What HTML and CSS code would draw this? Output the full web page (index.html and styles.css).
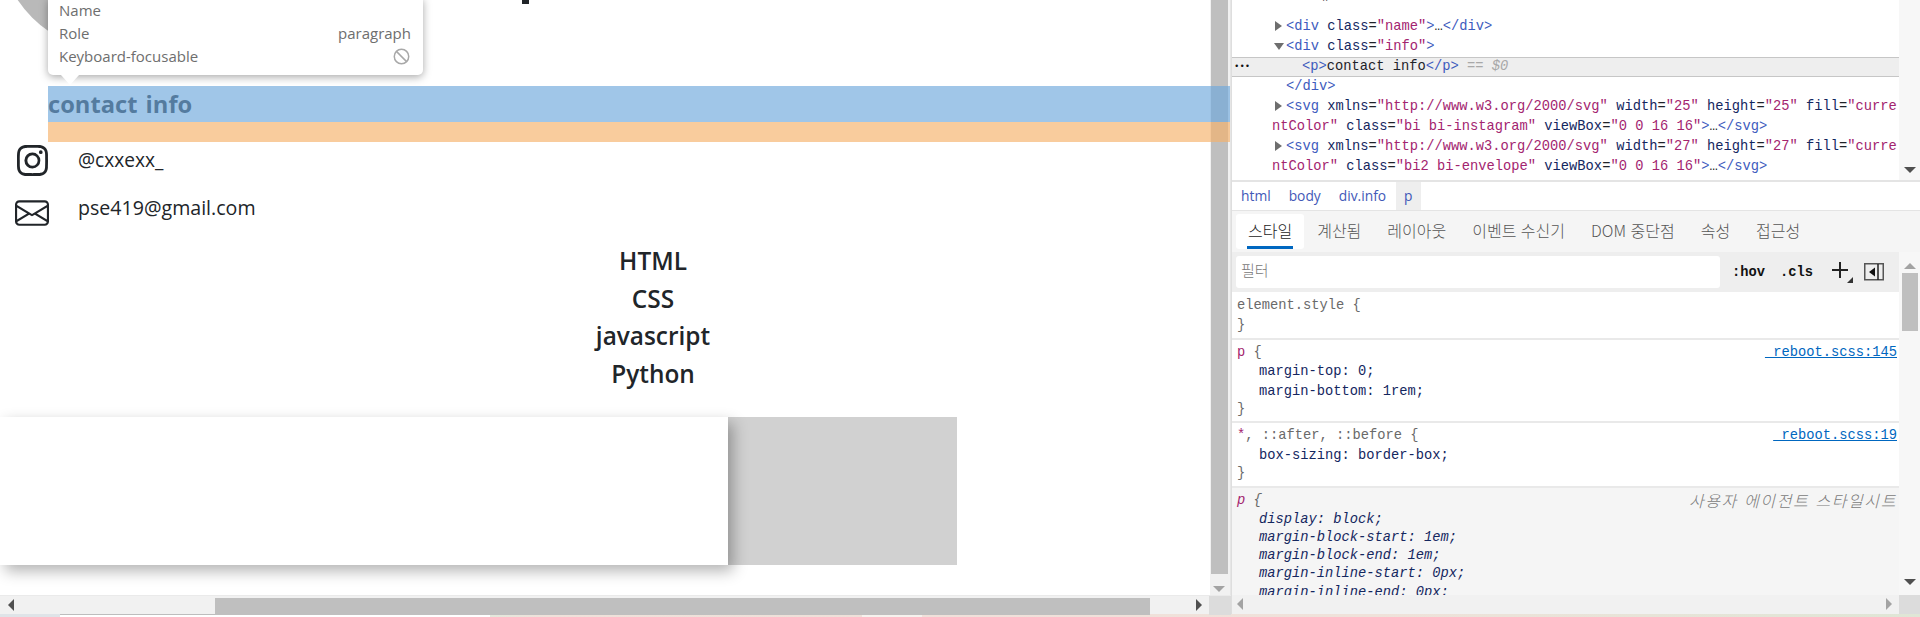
FILE: index.html
```html
<!DOCTYPE html>
<html lang="ko">
<head>
<meta charset="utf-8">
<title>contact info</title>
<link rel="stylesheet" href="styles.css">
</head>
<body>
<div class="app">
  <div class="main">
    <div class="left">
      <div class="upper">
        <div class="viewport">
          <div class="avatar"></div>
          <div class="stem"></div>
          <div class="info"><p class="info-title">contact info</p></div>
          <div class="contact-row row-insta">
            <svg class="icon-insta" viewBox="0 0 16 16" fill="currentColor"><path d="M8 0C5.829 0 5.556.01 4.703.048 3.85.088 3.269.222 2.76.42a3.917 3.917 0 0 0-1.417.923A3.927 3.927 0 0 0 .42 2.76C.222 3.268.087 3.85.048 4.7.01 5.555 0 5.827 0 8.001c0 2.172.01 2.444.048 3.297.04.852.174 1.433.372 1.942.205.526.478.972.923 1.417.444.445.89.719 1.416.923.51.198 1.09.333 1.942.372C5.555 15.99 5.827 16 8 16s2.444-.01 3.298-.048c.851-.04 1.434-.174 1.943-.372a3.916 3.916 0 0 0 1.416-.923c.445-.445.718-.891.923-1.417.197-.509.332-1.09.372-1.942C15.99 10.445 16 10.173 16 8s-.01-2.445-.048-3.299c-.04-.851-.175-1.433-.372-1.941a3.926 3.926 0 0 0-.923-1.417A3.911 3.911 0 0 0 13.24.42c-.51-.198-1.092-.333-1.943-.372C10.443.01 10.172 0 7.998 0h.003zm-.717 1.442h.718c2.136 0 2.389.007 3.232.046.78.035 1.204.166 1.486.275.373.145.64.319.92.599.28.28.453.546.598.92.11.281.24.705.275 1.485.039.843.047 1.096.047 3.231s-.008 2.389-.047 3.232c-.035.78-.166 1.203-.275 1.485a2.47 2.47 0 0 1-.599.919c-.28.28-.546.453-.92.598-.28.11-.704.24-1.485.276-.843.038-1.096.047-3.232.047s-2.39-.009-3.233-.047c-.78-.036-1.203-.166-1.485-.276a2.478 2.478 0 0 1-.92-.598 2.48 2.48 0 0 1-.6-.92c-.109-.281-.24-.705-.275-1.485-.038-.843-.046-1.096-.046-3.233 0-2.136.008-2.388.046-3.231.036-.78.166-1.204.276-1.486.145-.373.319-.64.599-.92.28-.28.546-.453.92-.598.282-.11.705-.24 1.485-.276.738-.034 1.024-.044 2.515-.045v.002zm4.988 1.328a.96.96 0 1 0 0 1.92.96.96 0 0 0 0-1.92zm-4.27 1.122a4.109 4.109 0 1 0 0 8.217 4.109 4.109 0 0 0 0-8.217zm0 1.441a2.667 2.667 0 1 1 0 5.334 2.667 2.667 0 0 1 0-5.334z"/></svg>
            <span class="contact-text">@cxxexx_</span>
          </div>
          <div class="contact-row row-mail">
            <svg class="icon-mail" viewBox="0 0 16 16" fill="currentColor"><path d="M0 4a2 2 0 0 1 2-2h12a2 2 0 0 1 2 2v8a2 2 0 0 1-2 2H2a2 2 0 0 1-2-2V4Zm2-1a1 1 0 0 0-1 1v.217l7 4.2 7-4.2V4a1 1 0 0 0-1-1H2Zm13 2.383-4.708 2.825L15 11.105V5.383Zm-.034 6.876-5.64-3.471L8 9.583l-1.326-.795-5.64 3.47A1 1 0 0 0 2 13h12a1 1 0 0 0 .966-.741ZM1 11.105l4.708-2.897L1 5.383v5.722Z"/></svg>
            <span class="contact-text">pse419@gmail.com</span>
          </div>
          <div class="skills">
            <div>HTML</div>
            <div>CSS</div>
            <div>javascript</div>
            <div>Python</div>
          </div>
          <div class="band"><div class="card"></div></div>

          <div class="tooltip">
            <div class="tip-row"><span>Name</span></div>
            <div class="tip-row"><span>Role</span><span>paragraph</span></div>
            <div class="tip-row"><span>Keyboard-focusable</span>
              <svg class="tip-no" viewBox="0 0 16 16" fill="none" stroke="currentColor" stroke-width="1.4"><circle cx="8" cy="8" r="6.8"/><path d="M3.2 3.2l9.6 9.6"/></svg>
            </div>
            <div class="tip-arrow"></div>
          </div>
        </div>
        <div class="vbar">
          <div class="vthumb"></div>
          <div class="arrow-down arrow-light"></div>
        </div>
      </div>
      <div class="hbar">
        <div class="arrow-left"></div>
        <div class="hthumb"></div>
        <div class="arrow-right"></div>
        <div class="corner"></div>
      </div>
      <div class="hl-overlay"><div class="hl-blue"></div><div class="hl-orange"></div></div>
    </div>

    <div class="dev">
      <div class="dom">
        <div class="dom-lines">
          <div class="ln ln-quote"><span class="ind-q">"</span></div>
          <div class="ln ind1"><i class="tri-r"></i><span class="t">&lt;div</span> <span class="a">class</span>=<span class="v">"name"</span><span class="t">&gt;</span>…<span class="t">&lt;/div&gt;</span></div>
          <div class="ln ind1"><i class="tri-d"></i><span class="t">&lt;div</span> <span class="a">class</span>=<span class="v">"info"</span><span class="t">&gt;</span></div>
          <div class="ln ln-sel"><span class="dots">•••</span><span class="t">&lt;p&gt;</span>contact info<span class="t">&lt;/p&gt;</span> <span class="eq">== <em>$0</em></span></div>
          <div class="ln ind1"><span class="t">&lt;/div&gt;</span></div>
          <div class="ln ind1"><i class="tri-r"></i><span class="t">&lt;svg</span> <span class="a">xmlns</span>=<span class="v">"http://www.w3.org/2000/svg"</span> <span class="a">width</span>=<span class="v">"25"</span> <span class="a">height</span>=<span class="v">"25"</span> <span class="a">fill</span>=<span class="v">"curre</span></div>
          <div class="ln ind0"><span class="v">ntColor"</span> <span class="a">class</span>=<span class="v">"bi bi-instagram"</span> <span class="a">viewBox</span>=<span class="v">"0 0 16 16"</span><span class="t">&gt;</span>…<span class="t">&lt;/svg&gt;</span></div>
          <div class="ln ind1"><i class="tri-r"></i><span class="t">&lt;svg</span> <span class="a">xmlns</span>=<span class="v">"http://www.w3.org/2000/svg"</span> <span class="a">width</span>=<span class="v">"27"</span> <span class="a">height</span>=<span class="v">"27"</span> <span class="a">fill</span>=<span class="v">"curre</span></div>
          <div class="ln ind0"><span class="v">ntColor"</span> <span class="a">class</span>=<span class="v">"bi2 bi-envelope"</span> <span class="a">viewBox</span>=<span class="v">"0 0 16 16"</span><span class="t">&gt;</span>…<span class="t">&lt;/svg&gt;</span></div>
        </div>
        <div class="dev-vbar dom-vbar"><div class="arrow-down"></div></div>
      </div>

      <div class="crumbs">
        <span class="crumb">html</span><span class="crumb">body</span><span class="crumb">div.info</span><span class="crumb crumb-on">p</span>
      </div>

      <div class="tabs">
        <span class="tab tab-on">스타일</span>
        <span class="tab">계산됨</span>
        <span class="tab">레이아웃</span>
        <span class="tab">이벤트 수신기</span>
        <span class="tab">DOM 중단점</span>
        <span class="tab">속성</span>
        <span class="tab">접근성</span>
      </div>

      <div class="styles-wrap">
        <div class="styles-col">
          <div class="filter">
            <div class="filter-input">필터</div>
            <span class="tool tool-hov">:hov</span>
            <span class="tool tool-cls">.cls</span>
            <span class="tool-plus">
              <svg class="plus-svg" viewBox="0 0 24 24" fill="none"><path d="M10 2v16M2 10h16" stroke="#222" stroke-width="2"/><path d="M23 23h-6l6-6z" fill="#333"/></svg>
            </span>
            <svg class="toggle" viewBox="0 0 20 18" fill="none"><rect x=".75" y=".75" width="18.5" height="16" stroke="#555" stroke-width="1.5"/><path d="M14 1v16" stroke="#222" stroke-width="1.5"/><path d="M11 4.5v9L5 9z" fill="#111"/></svg>
          </div>
          <div class="rule rule-el">
            <div class="ln2 sel-first"><span class="sel">element.style {</span></div>
            <div class="ln2"><span class="sel">}</span></div>
          </div>
          <div class="rule rule-p">
            <div class="ln2 sel-first"><span class="selp">p</span> <span class="sel">{</span><a class="src">_reboot.scss:145</a></div>
            <div class="ln2 decl">margin-top: 0;</div>
            <div class="ln2 decl">margin-bottom: 1rem;</div>
            <div class="ln2"><span class="sel">}</span></div>
          </div>
          <div class="rule rule-star">
            <div class="ln2 sel-first"><span class="selp">*</span><span class="sel">, ::after, ::before {</span><a class="src">_reboot.scss:19</a></div>
            <div class="ln2 decl">box-sizing: border-box;</div>
            <div class="ln2"><span class="sel">}</span></div>
          </div>
          <div class="rule rule-ua">
            <div class="ln2 sel-first"><span class="selp">p</span> <span class="sel">{</span><span class="ua-src">사용자 에이전트 스타일시트</span></div>
            <div class="ln2 decl">display: block;</div>
            <div class="ln2 decl">margin-block-start: 1em;</div>
            <div class="ln2 decl">margin-block-end: 1em;</div>
            <div class="ln2 decl">margin-inline-start: 0px;</div>
            <div class="ln2 decl">margin-inline-end: 0px;</div>
          </div>
        </div>
        <div class="dev-vbar styles-vbar">
          <div class="arrow-up arrow-light"></div>
          <div class="styles-thumb"></div>
          <div class="arrow-down"></div>
        </div>
      </div>

      <div class="dev-hbar">
        <div class="arrow-left arrow-light"></div>
        <div class="arrow-right arrow-light"></div>
        <div class="corner corner-dev"></div>
      </div>
    </div>
  </div>
  <div class="strip"><div class="strip-a"></div><div class="strip-b"></div><div class="strip-c"></div><div class="strip-d"></div><div class="strip-e"></div></div>
</div>
</body>
</html>
```

FILE: styles.css
```css
* { box-sizing: border-box; }
html, body { margin: 0; height: 100%; overflow: hidden; background: #fff; }
p { margin: 0; }

.app { width: 1920px; height: 617px; display: flex; flex-direction: column; font-family: "Open Sans", "Noto Sans CJK KR", sans-serif; }
.main { flex: 1; display: flex; min-height: 0; }
.left { width: 1231px; display: flex; flex-direction: column; position: relative; }
.upper { flex: 1; display: flex; min-height: 0; }

/* page viewport */
.viewport { flex: 1; position: relative; overflow: hidden; padding-top: 86px; color: #212529; }
.avatar { position: absolute; left: -2px; top: -182px; width: 234px; height: 234px; border-radius: 50%; background: #b9b9b9; }
.stem { position: absolute; left: 522px; top: 0; width: 7px; height: 4px; background: #212529; }
.info { padding-left: 48px; height: 56px; }
.info-title { font-size: 23.7px; font-weight: 700; line-height: 36px; word-spacing: 2px; }
.contact-row { display: flex; align-items: center; position: relative; }
.row-insta { height: 37px; padding-left: 17px; gap: 30px; }
.row-mail { height: 37px; padding-left: 15px; margin-top: 15px; gap: 29px; }
.icon-insta { width: 31px; height: 31px; flex: none; color: #212529; }
.icon-mail { width: 34px; height: 34px; flex: none; color: #212529; }
.contact-text { font-size: 19.5px; line-height: 28px; }
.row-insta .contact-text { margin-bottom: 2px; font-size: 19.1px; }
.row-mail .contact-text { margin-bottom: 9px; font-size: 19.6px; }
.skills { margin-top: 11px; width: 1306px; text-align: center; font-size: 24.4px; font-weight: 600; line-height: 37.5px; }
.band { margin-top: 25px; width: 957px; height: 148px; background: #d1d1d1; }
.card { width: 728px; height: 148px; background: #fff; box-shadow: 5px 6px 14px rgba(0,0,0,.3); }

/* tooltip */
.tooltip { position: absolute; left: 48px; top: -2px; width: 375px; height: 77px; padding: 0 12px 0 11px; background: #fff; border-radius: 0 0 5px 5px; box-shadow: 0 2px 8px rgba(0,0,0,.35); font-size: 15px; color: #6e6e6e; }
.tip-row { height: 23px; display: flex; justify-content: space-between; align-items: center; line-height: 23px; }
.tip-row:first-child { margin-top: 1px; }
.tip-no { width: 17px; height: 17px; color: #a8a8a8; margin-right: 1px; }
.tip-arrow { position: absolute; left: 13px; top: 77px; width: 0; height: 0; border-left: 9px solid transparent; border-right: 9px solid transparent; border-top: 10px solid #fff; }

/* highlight overlay */
.hl-overlay { position: absolute; left: 48px; top: 86px; right: 1px; pointer-events: none; }
.hl-blue { height: 36px; background: rgba(111,168,220,.66); }
.hl-orange { height: 20px; background: rgba(246,178,107,.66); }

/* scrollbars */
.vbar { width: 21px; background: #f1f1f1; position: relative; padding: 0 2px 0 1px; border-right: 1px solid #e6e6e6; }
.vthumb { height: 574px; background: #bfbfbf; }
.hbar { height: 19px; background: #f1f1f1; position: relative; padding-top: 2px; padding-left: 215px; border-top: 1px solid #eaeaea; }
.hthumb { width: 935px; height: 17px; background: #bfbfbf; }
.corner { position: absolute; right: 0; top: 0; width: 22px; height: 19px; background: #dcdcdc; }
.arrow-down, .arrow-up, .arrow-left, .arrow-right { position: absolute; width: 0; height: 0; }
.arrow-down { border-left: 6px solid transparent; border-right: 6px solid transparent; border-top: 6px solid #505050; }
.arrow-up { border-left: 6px solid transparent; border-right: 6px solid transparent; border-bottom: 6px solid #a3a3a3; }
.arrow-left { border-top: 6px solid transparent; border-bottom: 6px solid transparent; border-right: 6px solid #505050; left: 8px; top: 3px; }
.arrow-right { border-top: 6px solid transparent; border-bottom: 6px solid transparent; border-left: 6px solid #505050; left: 1196px; top: 3px; }
.vbar .arrow-down { left: 3px; bottom: 3px; border-top-color: #a3a3a3; }

/* devtools */
.dev { flex: 1; min-width: 0; display: flex; flex-direction: column; position: relative; border-left: 1px solid #dedede; font-family: "Liberation Mono", monospace; font-size: 13.75px; }
.dom { height: 182px; display: flex; border-bottom: 2px solid #e4e4e4; overflow: hidden; }
.dom-lines { flex: 1; min-width: 0; color: #1f2329; }
.ln { height: 20px; line-height: 20px; white-space: pre; position: relative; }
.ln-quote { height: 17px; line-height: 8px; }
.ind-q { padding-left: 89px; }
.ind1 { padding-left: 54px; }
.ind0 { padding-left: 40px; }
.t { color: #3d5bbd; }
.a { color: #14275f; }
.v { color: #a3246f; }
.ln-sel { height: 20px; line-height: 18px; background: #eeeeee; border-top: 1px solid #c6c6c6; border-bottom: 1px solid #c6c6c6; padding-left: 70px; }
.dots { position: absolute; left: 2px; top: 0; font-size: 9px; color: #111; }
.eq { color: #a8a8a8; }
.eq em { font-style: italic; }
.tri-r, .tri-d { position: absolute; width: 0; height: 0; }
.tri-r { left: 43px; top: 4px; border-top: 5px solid transparent; border-bottom: 5px solid transparent; border-left: 7px solid #6e6e6e; }
.tri-d { left: 42px; top: 6px; border-left: 5px solid transparent; border-right: 5px solid transparent; border-top: 7px solid #6e6e6e; }

.dev-vbar { width: 21px; flex: none; background: #f7f7f7; position: relative; }
.dom-vbar .arrow-down { left: 5px; top: 167px; }

.crumbs { height: 29px; display: flex; align-items: stretch; padding-left: 9px; font-family: "Open Sans", sans-serif; font-size: 13.8px; color: #4259b8; border-bottom: 1px solid #e4e4e4; }
.crumb { display: flex; align-items: center; margin-right: 18px; line-height: 1; }
.crumb-on { background: #eeeeee; padding: 0 8px; margin: 0 0 0 -8px; }

.tabs { height: 41px; flex: none; display: flex; align-items: flex-start; padding: 3px 0 0 4px; background: #f5f5f5; font-family: "Noto Sans CJK KR", sans-serif; font-size: 16px; font-weight: 300; color: #555; }
.tab { height: 35px; line-height: 33px; padding: 0 13px; white-space: pre; position: relative; }
.tab-on { background: #fff; color: #1c1c1c; padding: 0 12px; border-radius: 3px; }
.tab-on::after { content: ""; position: absolute; left: 11px; right: 11px; bottom: 0; height: 3px; background: #0067c0; }

.styles-wrap { flex: 1; min-height: 0; display: flex; overflow: hidden; }
.styles-col { flex: 1; min-width: 0; overflow: hidden; color: #14275f; }
.filter { height: 40px; background: #eeeeee; display: flex; align-items: center; padding-left: 4px; position: relative; font-weight: 700; }
.filter-input { width: 484px; height: 32px; background: #fff; border-radius: 3px; padding-left: 5px; line-height: 28px; font-family: "Noto Sans CJK KR", sans-serif; font-size: 15px; font-weight: 300; color: #777; }
.tool { color: #111; font-size: 13.75px; }
.tool-hov { margin-left: 12px; }
.tool-cls { margin-left: 15px; }
.tool-plus { display: flex; margin-left: 17px; }
.plus-svg { width: 24px; height: 24px; }
.toggle { width: 20px; height: 18px; margin-left: 10px; }

.rule { border-bottom: 2px solid #e9e9e9; padding: 3px 0 4px 5px; }
.ln2 { line-height: 19px; height: 19px; white-space: pre; position: relative; color: #14275f; }
.decl { padding-left: 22px; }
.sel { color: #6a6a6a; }
.selp { color: #a3246f; }
.rule-el { height: 48px; padding-top: 4px; }
.rule-el .ln2:last-child { margin-top: 1px; }
.rule-p { height: 83px; padding-top: 3px; }
.rule-p .decl:nth-child(3) { margin-top: 1px; margin-bottom: -1px; }
.rule-star { height: 65px; padding-top: 3px; }
.rule-star .decl { margin-top: 1px; margin-bottom: -1px; }
.rule-ua { background: #f5f5f5; border: 0; font-style: italic; padding-top: 3px; }
.rule-ua .decl { line-height: 18.3px; height: 18.3px; }
.rule-ua .sel-first { margin-bottom: .5px; }
.src { position: absolute; right: 2px; top: 0; color: #0067c0; text-decoration: underline; font-style: normal; }
.ua-src { position: absolute; right: 2px; top: 0; color: #7b7b7b; font-family: "Noto Sans CJK KR", sans-serif; font-size: 16px; letter-spacing: 1.6px; font-weight: 300; line-height: 19px; }

.styles-vbar .arrow-up { left: 5px; top: 11px; }
.styles-thumb { position: absolute; left: 3px; top: 21px; width: 16px; height: 58px; background: #bfbfbf; }
.styles-vbar .arrow-down { left: 5px; top: 327px; }

.dev-hbar { height: 19px; flex: none; background: #f1f1f1; position: relative; }
.dev-hbar .arrow-left { left: 5px; top: 3px; border-right-color: #a3a3a3; }
.dev-hbar .arrow-right { left: 654px; top: 3px; border-left-color: #a3a3a3; }
.corner-dev { width: 21px; }

/* bottom strip */
.strip { height: 3px; flex: none; display: flex; }
.strip-a { width: 60px; background: #dfe4e8; }
.strip-b { width: 430px; background: #fff; border-top: 1px solid #bdbdbd; }
.strip-c { width: 372px; background: linear-gradient(90deg, #e3e8dc, #efe1da 15%, #eee0d9); }
.strip-d { width: 60px; background: #f6f2ee; }
.strip-e { flex: 1; background: linear-gradient(90deg, #f0e0da, #efe2da 45%, #dfe6d6); }
```
